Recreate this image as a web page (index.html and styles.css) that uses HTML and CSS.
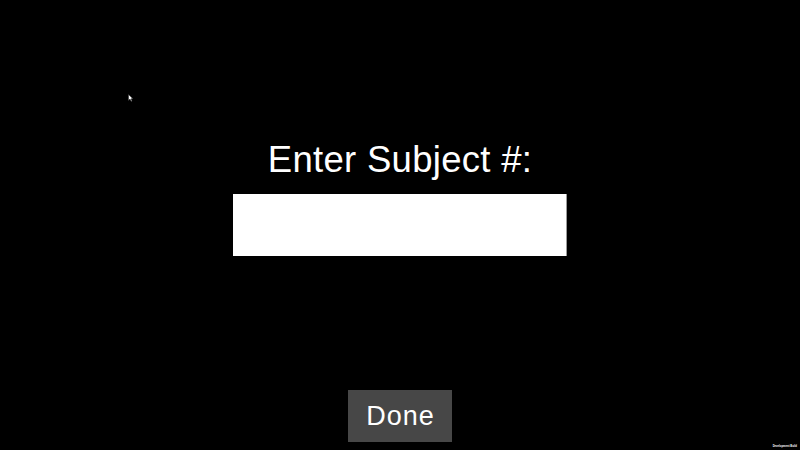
FILE: index.html
```html
<!DOCTYPE html>
<html>
<head>
<meta charset="utf-8">
<link rel="stylesheet" href="styles.css">
</head>
<body>
<div class="screen">
  <div class="title">Enter Subject #:</div>
  <div class="field"></div>
  <div class="btn">Done</div>
  <svg class="cursor" width="6" height="8" viewBox="0 0 6 8"><path d="M0.5 0.5 L0.5 6.5 L2 5 L3.2 7.5 L4 7.1 L3 4.8 L5 4.8 Z" fill="#fff" stroke="#222" stroke-width="0.5"/></svg>
  <div class="devbuild">Development Build</div>
</div>
</body>
</html>
```
FILE: styles.css
```css
html, body {
  margin: 0;
  padding: 0;
  background: #000;
}
.screen {
  position: relative;
  width: 800px;
  height: 450px;
  overflow: hidden;
  display: flex;
  flex-direction: column;
  align-items: center;
  padding-top: 140px;
  box-sizing: border-box;
  font-family: "Liberation Sans", Arial, sans-serif;
  color: #fff;
}
.title {
  height: 40px;
  line-height: 40px;
  font-size: 36.5px;
  letter-spacing: 0.3px;
  white-space: nowrap;
}
.field {
  margin-top: 14px;
  width: 334px;
  height: 62px;
  background: #fff;
  box-sizing: border-box;
  border-right: 1px solid #9a9a9a;
}
.btn {
  margin-top: 134px;
  width: 104px;
  height: 52px;
  line-height: 52px;
  text-align: center;
  background: #474747;
  font-size: 27px;
  letter-spacing: 1px;
  text-indent: 1px;
  color: #fff;
}
.cursor {
  position: absolute;
  left: 128px;
  top: 94px;
}
.devbuild {
  position: absolute;
  right: 3px;
  bottom: 2px;
  font-size: 2.7px;
  font-weight: bold;
  color: #fff;
  white-space: nowrap;
}
```
